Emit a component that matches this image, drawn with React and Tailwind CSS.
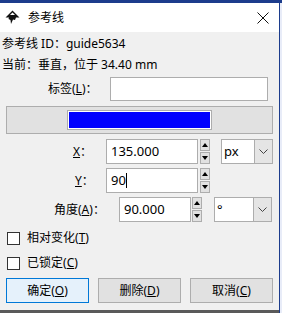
import React from 'react';

const font = { fontFamily: '"Noto Sans", "Noto Sans CJK SC", sans-serif' };

const Spin = ({ h = 'h-[25px]' }) => (
  <div className={`flex flex-col justify-between ${h} w-[10px]`}>
    <div className="h-[12px] border border-[#adadad] bg-[#e1e1e1] flex items-center justify-center">
      <svg width="6" height="4" viewBox="0 0 6 4"><path d="M0 4 L3 0 L6 4 Z" fill="#000" /></svg>
    </div>
    <div className="h-[12px] border border-[#adadad] bg-[#e1e1e1] flex items-center justify-center">
      <svg width="6" height="4" viewBox="0 0 6 4"><path d="M0 0 L3 4 L6 0 Z" fill="#000" /></svg>
    </div>
  </div>
);

const Combo = ({ value, w }) => (
  <div className={`flex h-[25px] ${w} border border-[#adadad] bg-white`}>
    <div className="flex-1 pl-[2px] flex items-center text-[13px] text-black leading-none">{value}</div>
    <div className="w-[18px] bg-[#e5e5e5] border-l border-[#adadad] flex items-center justify-center">
      <svg width="9" height="5" viewBox="0 0 9 5"><path d="M0.5 0.5 L4.5 4.5 L8.5 0.5" fill="none" stroke="#444" strokeWidth="1" /></svg>
    </div>
  </div>
);

const Check = ({ label, u }) => (
  <div className="flex items-center h-[14px] pl-[7px] gap-[7px]">
    <div className="w-[13px] h-[13px] border border-[#333] bg-white" />
    <span className="text-[12px] text-black">{label}(<span className="underline">{u}</span>)</span>
  </div>
);

export default function App() {
  return (
    <div className="w-[282px] h-[313px] bg-[#e8ecf8] flex flex-col overflow-hidden" style={font}>
      <div className="h-[3px] bg-[#1c3c8c] shrink-0" />
      <div className="flex flex-1">
        <div className="w-[279px] flex flex-col bg-[#f0f0f0]">
          {/* title bar */}
          <div className="h-[29px] bg-white flex items-center shrink-0">
            <svg className="ml-[5px]" width="15" height="15" viewBox="0 0 15 15">
              <path d="M7.5 0.5 L14.5 7.5 L11 7.5 L10 10 L8 9.5 L6 14 L5.5 10 L3.5 9 L4 7.5 L0.5 7.5 Z" fill="#111" />
              <path d="M7.5 2.5 L10 5 L5 5 Z" fill="#fff" />
            </svg>
            <span className="ml-[8px] text-[12px] text-black">参考线</span>
            <svg className="ml-auto mr-[10px]" width="12" height="12" viewBox="0 0 12 12">
              <path d="M0.5 0.5 L11.5 11.5 M11.5 0.5 L0.5 11.5" stroke="#111" strokeWidth="1" />
            </svg>
          </div>
          <div className="flex flex-col flex-1">
            <div className="pl-[2px] mt-[1px] text-[12px] text-black leading-[22px]">参考线 ID：guide5634</div>
            <div className="pl-[2px] text-[12px] text-black leading-[20px]">当前：垂直，位于 34.40 mm</div>
            <div className="flex items-center mt-[2px] h-[24px]">
              <span className="ml-[48px] text-[12px] text-black">标签(<span className="underline">L</span>)：</span>
              <div className="ml-auto mr-[11px] w-[158px] h-[24px] border border-[#adadad] bg-white" />
            </div>
            <div className="mt-[5px] mx-[6px] h-[28px] border border-[#adadad] bg-[#e1e1e1] flex items-center justify-center">
              <div className="w-[143px] h-[18px] border border-white bg-[#0000ff]" style={{ boxShadow: '0 0 0 1px #adadad' }} />
            </div>
            <div className="flex items-center mt-[5px] h-[25px]">
              <span className="ml-[73px] w-[33px] text-[12px] text-black"><span className="underline">X</span>：</span>
              <div className="w-[92px] h-[25px] border border-[#adadad] bg-white flex items-center pl-[4px] text-[13px] text-black">135.000</div>
              <div className="ml-[2px]"><Spin /></div>
              <div className="ml-[11px]"><Combo value="px" w="w-[52px]" /></div>
            </div>
            <div className="flex items-center mt-[4px] h-[25px]">
              <span className="ml-[75px] w-[31px] text-[12px] text-black"><span className="underline">Y</span>：</span>
              <div className="w-[92px] h-[25px] border border-[#adadad] bg-white flex items-center pl-[4px] text-[13px] text-black">
                90<span className="inline-block w-px h-[15px] bg-black" />
              </div>
              <div className="ml-[2px]"><Spin /></div>
            </div>
            <div className="flex items-center mt-[4px] h-[25px]">
              <span className="ml-[54px] w-[65px] text-[12px] text-black">角度(<span className="underline">A</span>)：</span>
              <div className="w-[72px] h-[25px] border border-[#adadad] bg-white flex items-center pl-[4px] text-[13px] text-black">90.000</div>
              <div className="ml-[1px]"><Spin /></div>
              <div className="ml-[12px]"><Combo value="°" w="w-[58px]" /></div>
            </div>
            <div className="mt-[9px]"><Check label="相对变化" u="T" /></div>
            <div className="mt-[11px]"><Check label="已锁定" u="C" /></div>
            <div className="flex mt-[8px] px-[6px] gap-[9px]">
              <div className="w-[83px] h-[25px] border border-[#0078d7] bg-[#e5f1fb] flex items-center justify-center text-[12px] text-black">确定(<span className="underline">O</span>)</div>
              <div className="w-[83px] h-[25px] border border-[#adadad] bg-[#e1e1e1] flex items-center justify-center text-[12px] text-black">删除(<span className="underline">D</span>)</div>
              <div className="w-[83px] h-[25px] border border-[#adadad] bg-[#e1e1e1] flex items-center justify-center text-[12px] text-black">取消(<span className="underline">C</span>)</div>
            </div>
          </div>
          <div className="h-[3px] bg-[#5a5a5a] shrink-0" />
        </div>
        <div className="w-px bg-[#1c3c8c]" />
      </div>
    </div>
  );
}
